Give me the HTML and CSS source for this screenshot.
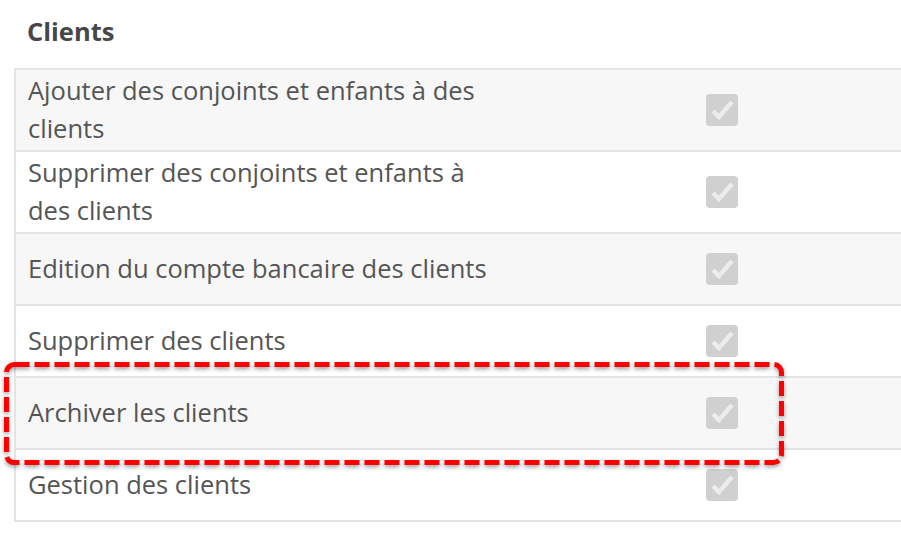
FILE: index.html
```html
<!DOCTYPE html>
<html lang="fr">
<head>
  <meta charset="UTF-8" />
  <meta name="viewport" content="width=device-width, initial-scale=1.0"/>
  <title>Droits - Clients</title>
  <link rel="stylesheet" href="styles.css">
</head>
<body>
  <div class="rights-section">
    <h3 class="section-title">Clients</h3>
    <table class="rights-table">
      <tr>
        <td class="right-label">Ajouter des conjoints et enfants à des clients</td>
        <td class="right-check"><span class="check-box"><svg viewBox="0 0 32 32"><polyline points="7,17 13,23 26,8"/></svg></span></td>
        <td></td>
      </tr>
      <tr>
        <td class="right-label">Supprimer des conjoints et enfants à des clients</td>
        <td class="right-check"><span class="check-box"><svg viewBox="0 0 32 32"><polyline points="7,17 13,23 26,8"/></svg></span></td>
        <td></td>
      </tr>
      <tr>
        <td class="right-label">Edition du compte bancaire des clients</td>
        <td class="right-check"><span class="check-box"><svg viewBox="0 0 32 32"><polyline points="7,17 13,23 26,8"/></svg></span></td>
        <td></td>
      </tr>
      <tr>
        <td class="right-label">Supprimer des clients</td>
        <td class="right-check"><span class="check-box"><svg viewBox="0 0 32 32"><polyline points="7,17 13,23 26,8"/></svg></span></td>
        <td></td>
      </tr>
      <tr>
        <td class="right-label">Archiver les clients</td>
        <td class="right-check"><span class="check-box"><svg viewBox="0 0 32 32"><polyline points="7,17 13,23 26,8"/></svg></span></td>
        <td></td>
      </tr>
      <tr>
        <td class="right-label">Gestion des clients</td>
        <td class="right-check"><span class="check-box"><svg viewBox="0 0 32 32"><polyline points="7,17 13,23 26,8"/></svg></span></td>
        <td></td>
      </tr>
    </table>
  </div>

  <!-- highlight drawn over the "Archiver" row -->
  <svg class="highlight" width="790" height="112" viewBox="0 0 790 112">
    <rect x="6.5" y="6.5" width="775" height="98" rx="8" ry="8"/>
  </svg>
</body>
</html>
```

FILE: styles.css
```css
html, body {
  margin: 0;
  padding: 0;
}
body {
  font-family: "Open Sans", Arial, sans-serif;
  background-color: #ffffff;
  color: #555;
  width: 901px;
  height: 551px;
  overflow: hidden;
  position: relative;
}
.rights-section {
  padding: 14px 0 0 14px;
}
.section-title {
  margin: 0 0 19px 13px;
  font-size: 25.5px;
  line-height: 35px;
  font-weight: bold;
  color: #474747;
}
.rights-table {
  border-collapse: collapse;
  width: 1000px;
  font-size: 25.5px;
  line-height: 38px;
}
.rights-table td {
  border-top: 2px solid #e3e3e8;
  border-bottom: 2px solid #e3e3e8;
  vertical-align: middle;
}
.rights-table td:first-child {
  border-left: 2px solid #e3e3e8;
}
.rights-table tr:nth-child(odd) {
  background-color: #f7f7f7;
}
.right-label {
  width: 480px;
  padding: 1px 12px 3px 12px;
}
.right-check {
  width: 32px;
  padding: 19px 0 19px 186px;
}
.check-box {
  display: block;
  width: 32px;
  height: 32px;
  border-radius: 4px;
  background-color: #d0d0d0;
}
.check-box svg {
  display: block;
  width: 32px;
  height: 32px;
}
.check-box polyline {
  fill: none;
  stroke: #ececec;
  stroke-width: 4.5;
}

/* Dashed highlight */
.highlight {
  position: absolute;
  left: 0;
  top: 358px;
  filter: drop-shadow(0 2px 2px rgba(0, 0, 0, 0.4));
}
.highlight rect {
  fill: none;
  stroke: #ff0000;
  stroke-width: 5;
  stroke-dasharray: 15 5;
}
```
